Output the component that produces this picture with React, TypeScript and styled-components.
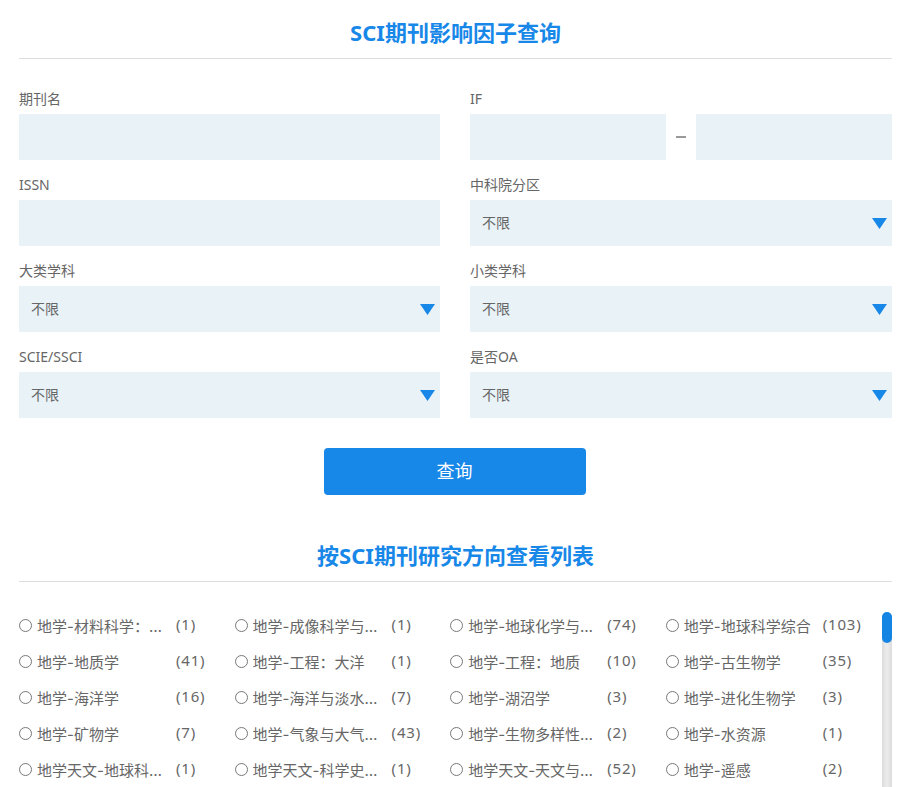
import React from "react";
import styled, { createGlobalStyle } from "styled-components";

const Global = createGlobalStyle`
  html, body { margin: 0; padding: 0; height: 787px; overflow: hidden; background: #fff; }
  body { font-family: "Noto Sans", "Noto Sans CJK SC", sans-serif; color: #666; }
  * { box-sizing: border-box; }
`;
const Page = styled.div`
  width: 902px; height: 787px; padding: 0 10px 0 19px; overflow: hidden;
  display: flex; flex-direction: column;
`;
const Title = styled.h2`
  margin: 0; height: 59px; padding-top: 15px; border-bottom: 1px solid #ddd;
  color: #1787e8; font-size: 22px; line-height: 34px; font-weight: 700; text-align: center;
`;
const Form = styled.div`
  display: grid; grid-template-columns: 421px 422px; column-gap: 30px; row-gap: 14px; margin-top: 29px;
`;
const Field = styled.div`display: flex; flex-direction: column;`;
const Label = styled.label`
  display: block; height: 26px; font-size: 14px; line-height: 22px; color: #666;
`;
const Input = styled.div`height: 46px; background: #e8f2f7; flex: 1;`;
const Range = styled.div`display: flex; align-items: center;`;
const Dash = styled.span`width: 30px; height: 2px; display: flex; justify-content: center;
  &::before { content: ""; width: 10px; height: 2px; background: #999; }
`;
const Select = styled.div`
  height: 46px; background: #e8f2f7; padding: 0 5px 2px 12px; display: flex; align-items: center; justify-content: space-between;
  font-size: 14px; color: #666;
`;
const Caret = styled.svg`width: 15px; height: 11px; display: block; margin-top: 2px;`;
const Button = styled.button`
  display: block; width: 262px; height: 47px; margin: 30px auto 0; padding: 0 0 3px; transform: translateX(-1px); border: 0; border-radius: 4px;
  background: #1787e8; color: #fff; font: 18px "Noto Sans", "Noto Sans CJK SC", sans-serif;
`;
const Title2 = styled(Title)`height: 60px; padding-top: 16px; margin-top: 27px;`;
const ListWrap = styled.div`display: flex; margin-top: 30px; flex: 1; min-height: 0;`;
const Grid = styled.div`
  flex: 1; display: grid; grid-template-columns: repeat(4, 215.6px); grid-auto-rows: 36px; align-content: start;
`;
const Item = styled.div`display: flex; align-items: center; height: 27px; font-size: 15px; color: #666;`;
const Radio = styled.span`
  width: 13px; height: 13px; border: 1px solid #777; border-radius: 50%; flex: none; margin-right: 5px;
`;
const Name = styled.span`
  width: 128px; padding-top: 2px; white-space: nowrap; overflow: hidden; text-overflow: ellipsis; line-height: 27px; flex: none;
  font-family: Inter, "Noto Sans CJK SC", sans-serif;
`;
const Count = styled.span`margin: -4px 0 0 11px; letter-spacing: 0.8px;`;
const Track = styled.div`
  width: 10px; flex: none; background: linear-gradient(90deg, #dcdcdc, #ececec 50%, #dcdcdc); border-radius: 5px 5px 0 0;
`;
const Thumb = styled.div`height: 31px; background: #1585e4; border-radius: 5px;`;

const Arrow = () => (
  <Caret viewBox="0 0 15 11"><path d="M0 0H15L7.5 11Z" fill="#1787e8" /></Caret>
);

const items: [string, number][] = [
  ["地学-材料科学：表征与测试", 1], ["地学-成像科学与照相技术", 1], ["地学-地球化学与地球物理", 74], ["地学-地球科学综合", 103],
  ["地学-地质学", 41], ["地学-工程：大洋", 1], ["地学-工程：地质", 10], ["地学-古生物学", 35],
  ["地学-海洋学", 16], ["地学-海洋与淡水生物学", 7], ["地学-湖沼学", 3], ["地学-进化生物学", 3],
  ["地学-矿物学", 7], ["地学-气象与大气科学", 43], ["地学-生物多样性保护", 2], ["地学-水资源", 1],
  ["地学天文-地球科学综合", 1], ["地学天文-科学史与科学哲学", 1], ["地学天文-天文与天体物理", 52], ["地学-遥感", 2],
];

const Sel = ({ label }: { label: string }) => (
  <Field>
    <Label>{label}</Label>
    <Select>不限<Arrow /></Select>
  </Field>
);

export default function App() {
  return (
    <Page>
      <Global />
      <Title>SCI期刊影响因子查询</Title>
      <Form>
        <Field><Label>期刊名</Label><Input /></Field>
        <Field><Label>IF</Label><Range><Input /><Dash /><Input /></Range></Field>
        <Field><Label>ISSN</Label><Input /></Field>
        <Sel label="中科院分区" />
        <Sel label="大类学科" />
        <Sel label="小类学科" />
        <Sel label="SCIE/SSCI" />
        <Sel label="是否OA" />
      </Form>
      <Button>查询</Button>
      <Title2>按SCI期刊研究方向查看列表</Title2>
      <ListWrap>
        <Grid>
          {items.map(([n, c]) => (
            <Item key={n}><Radio /><Name>{n}</Name><Count>({c})</Count></Item>
          ))}
        </Grid>
        <Track><Thumb /></Track>
      </ListWrap>
    </Page>
  );
}
